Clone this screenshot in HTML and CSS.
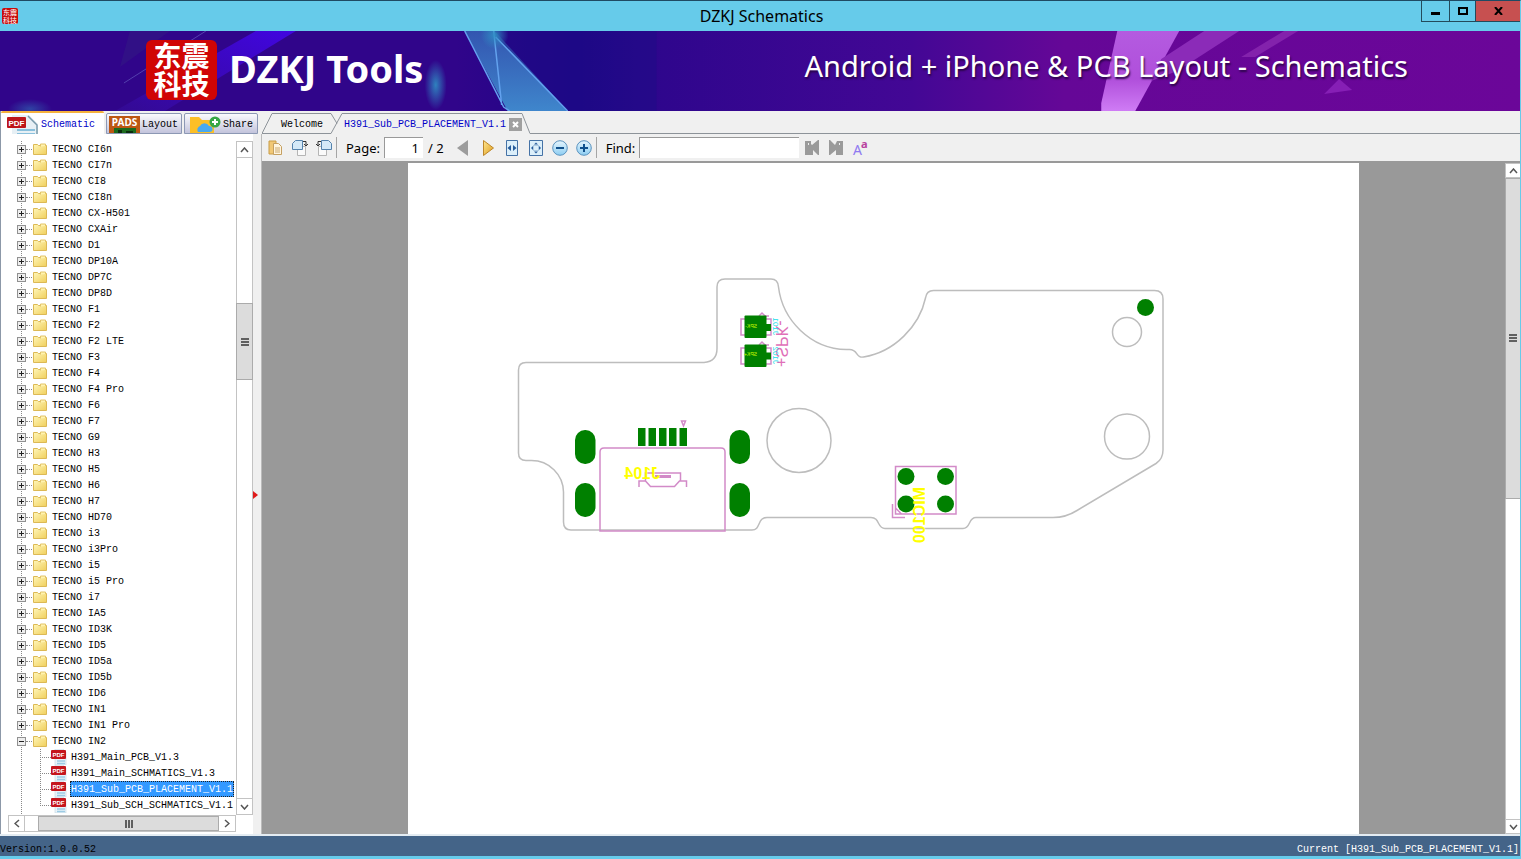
FILE: index.html
```html
<!DOCTYPE html>
<html lang="en">
  <head>
    <meta charset="UTF-8">
    <meta name="viewport" content="width=device-width, initial-scale=1.0">
    <title>DZKJ Schematics</title>
    <link rel="stylesheet" href="styles.css">
  </head>
  <body>
    <!-- shared icons -->
    <svg class="defs" width="0" height="0" aria-hidden="true">
      <defs>
        <linearGradient id="folderFill" x1="0" y1="0" x2="1" y2="1">
          <stop offset="0" stop-color="#fff6b8"/>
          <stop offset="1" stop-color="#f0cf5c"/>
        </linearGradient>
        <linearGradient id="gold" x1="0" y1="0" x2="1" y2="1">
          <stop offset="0" stop-color="#ffe890"/>
          <stop offset="1" stop-color="#dd9a1c"/>
        </linearGradient>
        <linearGradient id="sky" x1="0" y1="0" x2="0" y2="1">
          <stop offset="0" stop-color="#e6f5fd"/>
          <stop offset="1" stop-color="#8ccdf2"/>
        </linearGradient>
        <symbol id="folder" viewBox="0 0 14 12">
          <path d="M.5 1.5h4l1 1h8v9H.5z" fill="url(#folderFill)" stroke="#dcb955"/>
          <path d="M7.500 3.500V1h5v2" fill="#fff3b0" stroke="#e3c468"/>
        </symbol>
        <symbol id="pdf" viewBox="0 0 16 16">
          <path d="M4 0h8l3 3v13H4z" fill="#e9f3f9" stroke="#c4d6e0" stroke-width=".6"/>
          <path d="M6 12h8M6 14.500h8" stroke="#9ccbe4" stroke-width="1.300"/>
          <rect x="0" y="1" width="15" height="9" rx="1" fill="#c5161d"/>
          <text x="7.500" y="8" text-anchor="middle" font-family="Liberation Sans" font-size="6" font-weight="bold" fill="#fff">PDF</text>
        </symbol>
      </defs>
    </svg>

    <header class="titlebar">
      <span class="app-icon">东震<br>科技</span>
      <h1>DZKJ Schematics</h1>
      <div class="window-btns">
        <button class="win-btn" aria-label="Minimize"><svg width="11" height="9"><path d="M1 5h9v3H1z"/></svg></button>
        <button class="win-btn max" aria-label="Maximize"><svg width="10" height="8"><path d="M1 1h8v6H1z" fill="none" stroke="#000" stroke-width="2"/></svg></button>
        <button class="win-btn close" aria-label="Close"><svg width="9" height="8"><path d="M1 0l7 8M8 0L1 8" stroke="#000" stroke-width="2"/></svg></button>
      </div>
    </header>

    <div class="banner">
      <svg class="banner-bg" viewBox="0 0 1521 80" preserveAspectRatio="none" aria-hidden="true">
        <defs>
          <linearGradient id="shardBlue" x1="0" y1="0" x2="0" y2="1">
            <stop offset="0" stop-color="#3355b0"/>
            <stop offset="1" stop-color="#3f86cc"/>
          </linearGradient>
          <linearGradient id="shardPink" x1="0" y1="0" x2="0" y2="1">
            <stop offset="0" stop-color="#b45be0"/>
            <stop offset=".6" stop-color="#b04fdb"/>
            <stop offset="1" stop-color="#cf7cf5"/>
          </linearGradient>
          <linearGradient id="beam" x1="1" y1="0" x2="0" y2="1">
            <stop offset="0" stop-color="#4106e0"/>
            <stop offset="1" stop-color="#330a92"/>
          </linearGradient>
          <radialGradient id="glow">
            <stop offset="0" stop-color="#2f8fc4" stop-opacity=".9"/>
            <stop offset="1" stop-color="#2f8fc4" stop-opacity="0"/>
          </radialGradient>
        </defs>
        <path d="M130 0h40L120 36z" fill="#35207f" opacity=".4"/>
        <path d="M206 0L124 52" stroke="#5440ae"/>
        <path d="M256 0h40L165 80h-50z" fill="url(#beam)"/>
        <ellipse cx="436" cy="54" rx="11" ry="25" fill="url(#glow)"/>
        <ellipse cx="30" cy="78" rx="22" ry="10" fill="url(#glow)" opacity=".5"/>
        <path d="M465 0h30l73 80h-60z" fill="url(#shardBlue)"/>
        <path d="M495 0l2 6 70 74h90V0z" fill="#1b0e86" opacity=".45"/>
        <path d="M465 0l39 76 6 4M494 0l8 74M496 6l72 74" fill="none" stroke="#63a2ee" stroke-width="1.500"/>
        <circle cx="495" cy="4" r="14" fill="url(#glow)"/>
        <path d="M1118 0h62l-44 80h-34v-8z" fill="url(#shardPink)"/>
        <path d="M1205 0h35l-62 40-26 10 10-22z" fill="#8b2bb8"/>
        <path d="M1285 0h14l-43 26h-14z" fill="#8322ac"/>
        <path d="M1340 48l13 11-28 4z" fill="#861fb5"/>
      </svg>
      <div class="logo">东震<br>科技</div>
      <strong class="brand">DZKJ Tools</strong>
      <span class="slogan">Android + iPhone &amp; PCB Layout - Schematics</span>
    </div>

    <main class="workspace">
      <aside class="sidebar">
        <div class="side-tabs">
          <button class="side-tab active">
            <svg width="32" height="20" viewBox="0 0 32 20"><path d="M5 0h17l9 9v11H5z" fill="#e7f0f5"/><path d="M21 1l9 9v10" fill="none" stroke="#7899aa" stroke-width="1.500"/><path d="M10 15h18M10 19h18" stroke="#8ac0dc" stroke-width="2"/><rect y="2" width="19" height="11" rx="1" fill="#bd151a"/><text x="9.500" y="11" text-anchor="middle" font-family="Liberation Sans" font-size="8" font-weight="bold" fill="#fff">PDF</text></svg>
            Schematic
          </button>
          <button class="side-tab">
            <svg width="31" height="18" viewBox="0 0 31 18"><path d="M0 0h31v18H0z" fill="#bd5713"/><path d="M5 12h22v6H5z" fill="#1c6b1e"/><path d="M9 14h4v4H9zM17 15h7v3h-7z" fill="#0a2c0c"/><text x="15.500" y="10" text-anchor="middle" font-family="Noto Sans" font-size="10" font-weight="bold" fill="#fff">PADS</text></svg>
            Layout
          </button>
          <button class="side-tab share">
            <svg width="32" height="18" viewBox="0 0 32 18"><path d="M1 1h9l3 3h12v14H1z" fill="#fcbf26"/><path d="M9 16a4 4 0 0 1 2-6 5 5 0 0 1 9 0 3 3 0 0 1 1 6z" fill="#4aa9ef"/><circle cx="26" cy="6" r="5.500" fill="#37a745"/><path d="M26 3v6M23 6h6" stroke="#fff" stroke-width="2"/></svg>
            Share
          </button>
        </div>

        <div class="tree-box">
          <ul class="tree">
            <li><button class="toggle" aria-label="Expand"></button><svg class="ico"><use href="#folder"/></svg>TECNO CI6n</li>
            <li><button class="toggle" aria-label="Expand"></button><svg class="ico"><use href="#folder"/></svg>TECNO CI7n</li>
            <li><button class="toggle" aria-label="Expand"></button><svg class="ico"><use href="#folder"/></svg>TECNO CI8</li>
            <li><button class="toggle" aria-label="Expand"></button><svg class="ico"><use href="#folder"/></svg>TECNO CI8n</li>
            <li><button class="toggle" aria-label="Expand"></button><svg class="ico"><use href="#folder"/></svg>TECNO CX-H501</li>
            <li><button class="toggle" aria-label="Expand"></button><svg class="ico"><use href="#folder"/></svg>TECNO CXAir</li>
            <li><button class="toggle" aria-label="Expand"></button><svg class="ico"><use href="#folder"/></svg>TECNO D1</li>
            <li><button class="toggle" aria-label="Expand"></button><svg class="ico"><use href="#folder"/></svg>TECNO DP10A</li>
            <li><button class="toggle" aria-label="Expand"></button><svg class="ico"><use href="#folder"/></svg>TECNO DP7C</li>
            <li><button class="toggle" aria-label="Expand"></button><svg class="ico"><use href="#folder"/></svg>TECNO DP8D</li>
            <li><button class="toggle" aria-label="Expand"></button><svg class="ico"><use href="#folder"/></svg>TECNO F1</li>
            <li><button class="toggle" aria-label="Expand"></button><svg class="ico"><use href="#folder"/></svg>TECNO F2</li>
            <li><button class="toggle" aria-label="Expand"></button><svg class="ico"><use href="#folder"/></svg>TECNO F2 LTE</li>
            <li><button class="toggle" aria-label="Expand"></button><svg class="ico"><use href="#folder"/></svg>TECNO F3</li>
            <li><button class="toggle" aria-label="Expand"></button><svg class="ico"><use href="#folder"/></svg>TECNO F4</li>
            <li><button class="toggle" aria-label="Expand"></button><svg class="ico"><use href="#folder"/></svg>TECNO F4 Pro</li>
            <li><button class="toggle" aria-label="Expand"></button><svg class="ico"><use href="#folder"/></svg>TECNO F6</li>
            <li><button class="toggle" aria-label="Expand"></button><svg class="ico"><use href="#folder"/></svg>TECNO F7</li>
            <li><button class="toggle" aria-label="Expand"></button><svg class="ico"><use href="#folder"/></svg>TECNO G9</li>
            <li><button class="toggle" aria-label="Expand"></button><svg class="ico"><use href="#folder"/></svg>TECNO H3</li>
            <li><button class="toggle" aria-label="Expand"></button><svg class="ico"><use href="#folder"/></svg>TECNO H5</li>
            <li><button class="toggle" aria-label="Expand"></button><svg class="ico"><use href="#folder"/></svg>TECNO H6</li>
            <li><button class="toggle" aria-label="Expand"></button><svg class="ico"><use href="#folder"/></svg>TECNO H7</li>
            <li><button class="toggle" aria-label="Expand"></button><svg class="ico"><use href="#folder"/></svg>TECNO HD70</li>
            <li><button class="toggle" aria-label="Expand"></button><svg class="ico"><use href="#folder"/></svg>TECNO i3</li>
            <li><button class="toggle" aria-label="Expand"></button><svg class="ico"><use href="#folder"/></svg>TECNO i3Pro</li>
            <li><button class="toggle" aria-label="Expand"></button><svg class="ico"><use href="#folder"/></svg>TECNO i5</li>
            <li><button class="toggle" aria-label="Expand"></button><svg class="ico"><use href="#folder"/></svg>TECNO i5 Pro</li>
            <li><button class="toggle" aria-label="Expand"></button><svg class="ico"><use href="#folder"/></svg>TECNO i7</li>
            <li><button class="toggle" aria-label="Expand"></button><svg class="ico"><use href="#folder"/></svg>TECNO IA5</li>
            <li><button class="toggle" aria-label="Expand"></button><svg class="ico"><use href="#folder"/></svg>TECNO ID3K</li>
            <li><button class="toggle" aria-label="Expand"></button><svg class="ico"><use href="#folder"/></svg>TECNO ID5</li>
            <li><button class="toggle" aria-label="Expand"></button><svg class="ico"><use href="#folder"/></svg>TECNO ID5a</li>
            <li><button class="toggle" aria-label="Expand"></button><svg class="ico"><use href="#folder"/></svg>TECNO ID5b</li>
            <li><button class="toggle" aria-label="Expand"></button><svg class="ico"><use href="#folder"/></svg>TECNO ID6</li>
            <li><button class="toggle" aria-label="Expand"></button><svg class="ico"><use href="#folder"/></svg>TECNO IN1</li>
            <li><button class="toggle" aria-label="Expand"></button><svg class="ico"><use href="#folder"/></svg>TECNO IN1 Pro</li>
            <li><button class="toggle open" aria-label="Collapse"></button><svg class="ico"><use href="#folder"/></svg>TECNO IN2</li>
            <li class="file"><svg class="ico"><use href="#pdf"/></svg><a href="#">H391_Main_PCB_V1.3</a></li>
            <li class="file"><svg class="ico"><use href="#pdf"/></svg><a href="#">H391_Main_SCHMATICS_V1.3</a></li>
            <li class="file"><svg class="ico"><use href="#pdf"/></svg><a class="selected" href="#">H391_Sub_PCB_PLACEMENT_V1.1</a></li>
            <li class="file last"><svg class="ico"><use href="#pdf"/></svg><a href="#">H391_Sub_SCH_SCHMATICS_V1.1</a></li>
          </ul>
          <div class="vscroll">
            <button class="sb-btn" aria-label="Scroll up"><svg width="9" height="6"><path d="M1 5l3.500-4L8 5"/></svg></button>
            <div class="track tree-track"><div class="thumb"><i></i></div></div>
            <button class="sb-btn" aria-label="Scroll down"><svg width="9" height="6"><path d="M1 1l3.500 4L8 1"/></svg></button>
          </div>
          <div class="hscroll">
            <button class="sb-btn" aria-label="Scroll left"><svg width="6" height="9"><path d="M5 1L1 4.500 5 8"/></svg></button>
            <div class="track"><div class="thumb"><i></i></div></div>
            <button class="sb-btn" aria-label="Scroll right"><svg width="6" height="9"><path d="M1 1l4 3.500L1 8"/></svg></button>
          </div>
        </div>
        <div class="splitter"><svg width="5" height="8"><path d="M0 0l5 4-5 4z" fill="#e01b1b"/></svg></div>
      </aside>

      <section class="viewer">
        <div class="doc-tabs">
          <svg width="10" height="21"><path d="M0 20.500L10 .5M0 20.500h10"/></svg>
          <button class="doc-tab">Welcome</button>
          <svg width="11" height="21"><path d="M0 .5l6 10M0 20.500L11 .5"/></svg>
          <div class="doc-tab active">
            <button>H391_Sub_PCB_PLACEMENT_V1.1</button>
            <button class="tab-close" aria-label="Close tab"><svg width="7" height="7"><path d="M1 1l5 5M6 1L1 6"/></svg></button>
          </div>
          <svg width="8" height="21"><path d="M0 .5l8 20"/></svg>
          <div class="tabs-rest"></div>
        </div>

        <div class="toolbar">
          <div class="file-tools">
            <button class="tool" aria-label="Copy"><svg width="16" height="16"><path d="M1 1h7v13H1z" fill="#f1c876" stroke="#c99c46"/><path d="M5.500 3.500h5l3 3v8h-8z" fill="#fff5e0" stroke="#c5a062"/><path d="M7 8h5M7 10h5M7 12h5" stroke="#caa86e"/></svg></button>
            <button class="tool" aria-label="Rotate right"><svg width="16" height="16"><path d="M5.500 9v6.500h8v-9h-4" fill="#fafafa" stroke="#b5b5b5"/><path d="M3.500.5h7v9H.5v-6z" fill="#d4e9f8" stroke="#5583ad"/><path d="M11 1.500h3v4M12 4l2 2 2-2" fill="none" stroke="#333"/></svg></button>
            <button class="tool" aria-label="Rotate left"><svg width="16" height="16"><path d="M6 6.500H2.500v9h8V9" fill="#fafafa" stroke="#b5b5b5"/><path d="M5.500.5h7l3 3v6h-10z" fill="#d4e9f8" stroke="#5583ad"/><path d="M5 1.500H2v4M0 4l2 2 2-2" fill="none" stroke="#333"/></svg></button>
          </div>
          <span class="sep"></span>
          <label for="page">Page:</label>
          <input id="page" class="page-input" type="text" value="1">
          <span class="page-total">/ 2</span>
          <div class="nav-tools">
            <button class="tool" aria-label="Previous page"><svg width="16" height="16"><path d="M12 0v16L1 8z" fill="#9c9c9c"/></svg></button>
            <button class="tool" aria-label="Next page"><svg width="16" height="16"><path d="M3.500.5v15l10-7.500z" fill="url(#gold)" stroke="#bd862a"/></svg></button>
            <button class="tool" aria-label="Fit width"><svg width="16" height="16"><path d="M2.500.5h11v15h-11z" fill="#dceffa" stroke="#4572a6"/><path d="M7 5v6L3.500 8zM9 5v6l3.500-3z" fill="#275c9b"/></svg></button>
            <button class="tool" aria-label="Fit page"><svg width="16" height="16"><path d="M1.500.5h13v15h-13z" fill="#dceffa" stroke="#4572a6"/><path d="M8 2.500l2 2H6zM8 13.500l2-2H6zM3 8l2-2v4zM13 8l-2-2v4z" fill="#275c9b"/><path d="M5.500 5.500h5v5h-5z" fill="none" stroke="#7da3c8" stroke-dasharray="1 1"/></svg></button>
            <button class="tool" aria-label="Zoom out"><svg width="16" height="16"><circle cx="8" cy="8" r="7.300" fill="url(#sky)" stroke="#5b93bf"/><path d="M4 8h8" stroke="#10508c" stroke-width="2"/></svg></button>
            <button class="tool" aria-label="Zoom in"><svg width="16" height="16"><circle cx="8" cy="8" r="7.300" fill="url(#sky)" stroke="#5b93bf"/><path d="M4 8h8M8 4v8" stroke="#10508c" stroke-width="2"/></svg></button>
          </div>
          <span class="sep"></span>
          <label for="find">Find:</label>
          <input id="find" class="find-input" type="text">
          <div class="find-tools">
            <button class="tool" aria-label="Find previous"><svg width="16" height="16"><path d="M1 1h6v3l1 1 6-5h1v15h-1L9 10v5H1z" fill="#9a9a9a"/><path d="M4 3h1v2H4z" fill="#eee"/></svg></button>
            <button class="tool" aria-label="Find next"><svg width="16" height="16"><path d="M1 0h1l5 5 2-4h6v14H8v-5l-6 5H1z" fill="#9a9a9a"/><path d="M11 3h1v2h-1z" fill="#eee"/></svg></button>
            <button class="tool" aria-label="Match case"><svg width="20" height="26"><text x="1" y="20" font-family="Noto Sans" font-size="14" fill="#8f7af0">A</text><text x="9" y="13" font-family="Noto Sans" font-size="11" font-weight="bold" fill="#b8429f">a</text></svg></button>
          </div>
        </div>

        <div class="canvas">
          <div class="canvas-area">
            <div class="sheet">
              <svg width="951" height="671" viewBox="408 163 951 671">
                <!-- board outline and holes -->
                <g fill="none" stroke="#bdbdbd" stroke-width="1.500">
                  <path d="M717 287q0-8 8-8h46q7 0 7.500 8c4 33 32 62 68 62.500h3c9 0 6 9 14 7.500 31-5 56-31 62-59q1-7.500 8-7.500h221q8.500 0 8.500 8.500V450q0 9-7 13.500l-79 47q-11 7-24 7h-77c-8 0-5 11-13 11h-78c-8 0-5-11-14-11H767c-10 0-6 12.500-15 12.500H571q-7.500 0-7.500-8v-30a32 32 0 0 0-32-31.500H526q-7.500 0-7.500-7.500V370q0-7.500 7.500-7.500h178q13-1 13-14z"/>
                  <circle cx="799" cy="440.500" r="32"/>
                  <circle cx="1127" cy="332" r="14.500"/>
                  <circle cx="1127" cy="436.500" r="22.500"/>
                </g>
                <!-- silkscreen -->
                <g fill="none" stroke="#d28ac8" stroke-width="1.500">
                  <path d="M600 531V452q0-4 4-4h117q4 0 4 4v79z"/>
                  <path d="M639 487v-6h6.500l5 5.500h24l5-5.500h7v6M645.500 481v-8h35v8"/>
                  <path d="M655 476.500h16" stroke-width="3"/>
                  <path d="M681.500 421h4l-2 5z"/>
                  <path d="M745 319h-4v16h4M766 319h5v16h-5M759 316l3-3 3 3h4M745 348h-4v16h4M766 348h5v16h-5M759 345l3-3 3 3h4"/>
                  <path d="M895.500 466.500h60.500v47.500h-60.500zM892.500 504v13.500H905M895.500 508l6 6"/>
                </g>
                <!-- pads -->
                <g fill="#008000">
                  <rect x="575" y="430" width="20.500" height="34" rx="10"/>
                  <rect x="575" y="483" width="20.500" height="34" rx="10"/>
                  <rect x="729.500" y="430" width="20.500" height="34" rx="10"/>
                  <rect x="729.500" y="483" width="20.500" height="34" rx="10"/>
                  <path d="M638 428h7.500v18H638zM648.500 428h7.500v18h-7.500zM659 428h7.500v18H659zM669 428h7.500v18H669zM679.500 428h7.500v18h-7.500z"/>
                  <rect x="744.500" y="315.500" width="22" height="22.500" rx="1"/>
                  <rect x="744.500" y="344.500" width="22" height="22.500" rx="1"/>
                  <path d="M766 324h5v7h-5zM766 352.500h5v7h-5z"/>
                  <circle cx="1145.500" cy="307.500" r="8.500"/>
                  <circle cx="906" cy="476.500" r="8.500"/>
                  <circle cx="945.500" cy="476.500" r="8.500"/>
                  <circle cx="906" cy="504" r="8.500"/>
                  <circle cx="945.500" cy="504" r="8.500"/>
                </g>
                <!-- labels, seen from the back of the board -->
                <g font-family="Liberation Sans">
                  <text transform="translate(660 479) scale(-1 1)" font-size="16" font-weight="bold" fill="#ff0">J104</text>
                  <text transform="translate(913 487) rotate(90) scale(1 -1)" font-size="16" font-weight="bold" fill="#ff0" y="12">MIC100</text>
                  <text transform="translate(776 367) rotate(-90) scale(1 -1)" font-size="16" fill="#e070b8">+SPK-</text>
                  <text transform="translate(773 335) rotate(-90) scale(1 -1)" font-size="8" fill="#22dcea">J101</text>
                  <text transform="translate(773 364) rotate(-90) scale(1 -1)" font-size="8" fill="#22dcea">J102</text>
                  <text transform="translate(757 328) scale(-1 1)" font-size="5" fill="#cf0">SPK-</text>
                  <text transform="translate(757 356) scale(-1 1)" font-size="5" fill="#cf0">SPK+</text>
                </g>
              </svg>
            </div>
          </div>
          <div class="vscroll">
            <button class="sb-btn" aria-label="Scroll up"><svg width="9" height="6"><path d="M1 5l3.500-4L8 5"/></svg></button>
            <div class="track page-track"><div class="thumb"><i></i></div></div>
            <button class="sb-btn" aria-label="Scroll down"><svg width="9" height="6"><path d="M1 1l3.500 4L8 1"/></svg></button>
          </div>
        </div>
      </section>
    </main>

    <footer class="statusbar">
      <span class="version">Version:1.0.0.52</span>
      <span>Current [H391_Sub_PCB_PLACEMENT_V1.1]</span>
    </footer>
  </body>
</html>
```

FILE: styles.css
```css
* {
    box-sizing: border-box;
}

body {
    display: flex;
    flex-direction: column;
    height: 100vh;
    margin: 0;
    overflow: hidden;
    background-color: #f0f0f0;
    border-top: 1px solid #1f4a63;
    border-right: 1px solid #66cbea;
    border-bottom: 3px solid #66cbea;
    font-family: "Liberation Mono", monospace;
    font-size: 10px;
    color: #000;
}

button {
    padding: 0;
    border: none;
    background: none;
    font: inherit;
    color: inherit;
}

svg {
    display: block;
    flex: none;
}

.defs {
    position: absolute;
}

/* title bar */
.titlebar {
    display: grid;
    grid-template-columns: 1fr auto 1fr;
    align-items: center;
    flex: none;
    height: 30px;
    padding-left: 2px;
    margin-right: -1px;
    background-color: #66cbea;
}

.titlebar h1 {
    margin: 0;
    font-family: "Noto Sans", sans-serif;
    font-size: 16px;
    font-weight: normal;
    line-height: 20px;
}

.app-icon {
    width: 16px;
    height: 16px;
    border-radius: 2px;
    background-color: #c80c0c;
    color: #fff;
    font-family: "Noto Sans CJK SC", sans-serif;
    font-size: 7px;
    line-height: 8px;
    text-align: center;
}

.window-btns {
    display: flex;
    align-self: start;
    justify-self: end;
    height: 21px;
    border: 1px solid #234a5b;
    border-width: 0 0 1px 1px;
}

.win-btn {
    display: flex;
    align-items: center;
    justify-content: center;
    width: 28px;
    border-right: 1px solid #234a5b;
}

.win-btn.max {
    width: 26px;
}

.win-btn.close {
    width: 45px;
    border-right: none;
    background-color: #c75050;
}

/* banner */
.banner {
    position: relative;
    display: flex;
    align-items: center;
    flex: none;
    height: 80px;
    padding: 0 112px 2px 146px;
    background: linear-gradient(90deg, #30058a 0, #30058a 30%, #1f0587 38%, #2d068c 42%, #430795 60%, #650797 70%, #6b0699 100%);
    color: #fff;
    font-family: "Noto Sans", sans-serif;
}

.banner-bg {
    position: absolute;
    inset: 0;
    width: 100%;
    height: 100%;
}

.logo {
    position: relative;
    width: 71px;
    height: 60px;
    padding-top: 1px;
    border-radius: 6px;
    background-color: #d00505;
    font-family: "Noto Sans CJK SC", sans-serif;
    font-size: 28px;
    font-weight: bold;
    line-height: 28px;
    text-align: center;
}

.brand {
    position: relative;
    margin-left: 12px;
    padding-bottom: 4px;
    font-size: 38px;
    line-height: 44px;
}

.slogan {
    position: relative;
    margin-left: auto;
    padding-bottom: 8px;
    font-size: 29px;
    line-height: 36px;
    white-space: nowrap;
    text-shadow: 1px 2px 2px #2a0548;
}

/* workspace */
.workspace {
    display: flex;
    flex: 1;
    min-height: 0;
    border-bottom: 2px solid #e4ecf2;
}

.sidebar {
    display: grid;
    grid-template-columns: 1fr 9px;
    grid-template-rows: 23px 1fr;
    flex: none;
    width: 262px;
    background-color: #fff;
    border-left: 1px solid #8c98a8;
}

.side-tabs {
    grid-column: 1 / 3;
    display: flex;
    align-items: flex-end;
    gap: 2px;
    background-color: #f0f0f0;
}

.side-tab {
    display: flex;
    align-items: center;
    gap: 2px;
    height: 21px;
    padding: 2px 3px 0 2px;
    overflow: hidden;
    border: 1px solid #8c98b4;
    border-radius: 2px 2px 0 0;
    background: linear-gradient(#fafafd, #c3c4dc);
}

.side-tab.active {
    height: 23px;
    padding: 2px 9px 0 6px;
    border: none;
    border-top: 2px solid #f5b13c;
    background: #fff;
    color: #0000c8;
}

.side-tab.share {
    padding-left: 4px;
    padding-right: 4px;
}

.tree-box {
    display: grid;
    grid-template-columns: 1fr 17px;
    grid-template-rows: 1fr 17px;
    min-width: 0;
    min-height: 0;
    padding: 7px 0 2px 7px;
}

.tree {
    margin: 0;
    padding: 0;
    list-style: none;
    overflow: hidden;
    background: repeating-linear-gradient(#888 0 1px, transparent 1px 2px) 13px 0 / 1px 100% no-repeat;
}

.tree li {
    display: flex;
    align-items: center;
    height: 16px;
    padding-left: 9px;
    white-space: nowrap;
}

.tree .ico {
    width: 14px;
    height: 12px;
    margin-right: 5px;
}

/* plus / minus box with the dotted branch to the folder */
.toggle {
    width: 9px;
    height: 9px;
    margin-right: 7px;
    border: 1px solid #919191;
    background:
        linear-gradient(#222, #222) center / 5px 1px no-repeat,
        linear-gradient(#222, #222) center / 1px 5px no-repeat,
        #eee;
}

.toggle.open {
    background:
        linear-gradient(#222, #222) center / 5px 1px no-repeat,
        #eee;
}

.toggle::after {
    content: "";
    display: block;
    width: 6px;
    margin-left: 8px;
    border-top: 1px dotted #888;
}

.tree .file {
    padding-left: 0;
    margin-left: 32px;
    background: repeating-linear-gradient(#888 0 1px, transparent 1px 2px) 0 0 / 1px 100% no-repeat;
}

.tree .file.last {
    background-size: 1px 50%;
}

.tree .file::before {
    content: "";
    width: 11px;
    border-top: 1px dotted #888;
}

.tree .file .ico {
    width: 16px;
    height: 16px;
    margin-right: 3px;
}

.tree a {
    padding: 2px 1px 0;
    line-height: 14px;
    color: #000;
    text-decoration: none;
}

.tree a.selected {
    background-color: #3399ff;
    color: #fff;
    outline: 1px dotted #222;
    outline-offset: -1px;
}

/* scrollbars */
.vscroll {
    display: flex;
    flex-direction: column;
    width: 17px;
    border: 1px solid #c3c3c3;
    background-color: #fff;
}

.hscroll {
    display: flex;
    height: 17px;
    border: 1px solid #c3c3c3;
    background-color: #fff;
}

.sb-btn {
    display: flex;
    align-items: center;
    justify-content: center;
    flex: 0 0 16px;
}

.vscroll .sb-btn:first-child {
    border-bottom: 1px solid #c3c3c3;
}

.vscroll .sb-btn:last-child {
    border-top: 1px solid #c3c3c3;
}

.hscroll .sb-btn:first-child {
    border-right: 1px solid #c3c3c3;
}

.sb-btn path {
    fill: none;
    stroke: #555;
    stroke-width: 1.5;
}

.track {
    display: flex;
    flex: 1;
}

.vscroll .track {
    flex-direction: column;
}

.thumb {
    display: flex;
    align-items: center;
    justify-content: center;
    background-color: #dcdcdc;
    border: 1px solid #ababab;
}

.vscroll .thumb {
    margin: 0 -1px;
}

.tree-track .thumb {
    height: 12%;
}

.tree-track::before {
    content: "";
    height: 22.7%;
}

.page-track .thumb {
    height: 50%;
}

.hscroll .track {
    padding-left: 13px;
}

.hscroll .thumb {
    flex: 1;
}

.thumb i {
    width: 8px;
    height: 8px;
    background: repeating-linear-gradient(#606060 0 2px, transparent 2px 3px);
}

.hscroll .thumb i {
    background: repeating-linear-gradient(90deg, #606060 0 2px, transparent 2px 3px);
}

.splitter {
    display: flex;
    align-items: center;
    padding-top: 22px;
    background-color: #f0f0f0;
    border-right: 1px solid #bbb;
}

/* document tabs */
.viewer {
    display: flex;
    flex-direction: column;
    flex: 1;
    min-width: 0;
}

.doc-tabs {
    display: flex;
    align-items: flex-end;
    flex: none;
    height: 23px;
}

.doc-tabs > svg > path {
    fill: none;
    stroke: #8d9399;
}

.doc-tab {
    display: flex;
    align-items: center;
    gap: 3px;
    height: 21px;
    padding: 2px 8px 0 9px;
    border: 1px solid #8d9399;
    border-width: 1px 0;
}

.doc-tab.active {
    padding: 2px 0 0 2px;
    border-bottom-color: #f0f0f0;
    color: #0000c8;
}

.tab-close {
    display: flex;
    align-items: center;
    justify-content: center;
    width: 13px;
    height: 13px;
    background-color: #a0a0a0;
}

.tab-close path {
    stroke: #fff;
    stroke-width: 2;
}

.tabs-rest {
    flex: 1;
    border-bottom: 1px solid #8d9399;
}

/* toolbar */
.toolbar {
    display: flex;
    align-items: center;
    flex: none;
    height: 29px;
    padding-left: 6px;
    border-bottom: 2px solid #999;
    font-family: "Noto Sans", sans-serif;
    font-size: 13px;
}

.file-tools,
.nav-tools {
    display: flex;
    gap: 8px;
}

.find-tools {
    display: flex;
    align-items: center;
    gap: 8px;
    margin-left: 5px;
}

.nav-tools {
    margin-left: 12px;
}

.sep {
    width: 1px;
    height: 21px;
    margin: 0 9px 0 4px;
    background-color: #a5a5a5;
}

.toolbar input {
    height: 21px;
    padding: 0 4px;
    border: 1px solid #999;
    border-width: 1px 0 0 1px;
    background-color: #fff;
    font: inherit;
}

.page-input {
    width: 39px;
    margin: 0 5px 0 4px;
    text-align: right;
}

.find-input {
    width: 160px;
    margin-left: 4px;
}

/* page view */
.canvas {
    display: flex;
    flex: 1;
    min-height: 0;
}

.canvas-area {
    display: flex;
    justify-content: center;
    flex: 1;
    min-width: 0;
    overflow: hidden;
    background-color: #999;
}

.sheet {
    background-color: #fff;
}

.canvas .vscroll {
    width: 15px;
    border-right: none;
}

.canvas .sb-btn {
    flex-basis: 14px;
}

/* status bar */
.statusbar {
    display: flex;
    align-items: flex-end;
    justify-content: space-between;
    flex: none;
    height: 20px;
    padding: 0 1px 1px 0;
    background-color: #446488;
    color: #fff;
}

.version {
    color: #000;
}
```
